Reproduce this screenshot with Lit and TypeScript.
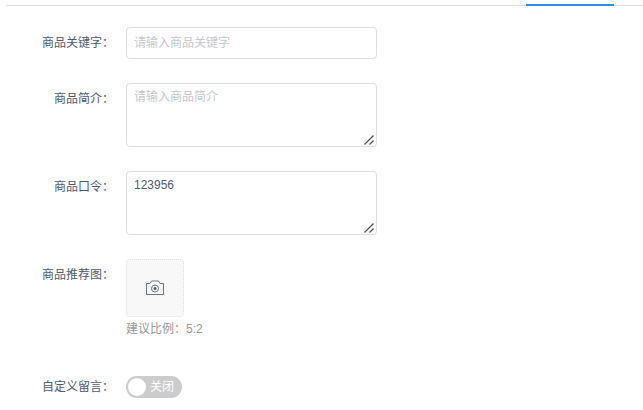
import { LitElement, html, css } from "lit";
import { customElement } from "lit/decorators.js";

@customElement("app-root")
export class AppRoot extends LitElement {
  static styles = css`
    :host {
      display: block;
      width: 643px;
      height: 410px;
      overflow: hidden;
      background: #fff;
      font-family: "Liberation Sans", "Noto Sans CJK SC", sans-serif;
      font-size: 12px;
      color: #515a6e;
    }
    .tabs {
      height: 6px;
      margin-left: 6px;
      box-sizing: border-box;
      border-bottom: 1px solid #dcdee2;
      display: flex;
      padding-left: 520px;
    }
    .tab-ink {
      width: 88px;
      height: 2px;
      margin-top: 4px;
      background: #2d8cf0;
    }
    form {
      display: flex;
      flex-direction: column;
      gap: 24px;
      padding-top: 21px;
    }
    .row {
      display: flex;
    }
    .label {
      width: 114px;
      flex: none;
      box-sizing: border-box;
      text-align: right;
      margin-right: 12px;
      line-height: 32px;
      white-space: nowrap;
    }
    input, textarea {
      width: 251px;
      box-sizing: border-box;
      border: 1px solid #dcdee2;
      border-radius: 4px;
      padding: 4px 7px;
      font: inherit;
      color: #515a6e;
      outline: none;
      background: #fff;
      display: block;
      margin: 0;
    }
    input { height: 32px; }
    textarea {
      height: 64px;
      line-height: 18px;
      resize: none;
    }
    .area { position: relative; width: 251px; height: 64px; }
    .grip { position: absolute; right: 3px; bottom: 2px; display: block; }
    ::placeholder { color: #c5c8ce; opacity: 1; }
    .upload {
      width: 58px;
      height: 58px;
      box-sizing: border-box;
      border: 1px dotted #dcdee2;
      border-radius: 4px;
      background: #f8f8f9;
      display: flex;
      align-items: center;
      justify-content: center;
    }
    .hint {
      color: #999;
      line-height: 16px;
      margin-top: 4px;
    }
    .switch-row { margin-top: 15px; }
    .switch-row .label { line-height: 22px; }
    .switch {
      width: 56px;
      height: 22px;
      border-radius: 11px;
      background: #ccc;
      box-sizing: border-box;
      padding: 2px;
      display: flex;
      align-items: center;
      gap: 4px;
      color: #fff;
      line-height: 18px;
    }
    .knob {
      width: 18px;
      height: 18px;
      border-radius: 50%;
      background: #fff;
      flex: none;
    }
  `;

  private grip() {
    return html`<svg class="grip" width="10" height="10" viewBox="0 0 10 10" fill="none" stroke="#555" stroke-width="1.3">
      <path d="M0.5 9.5 9.5 0.5" />
      <path d="M5.5 9.5 9.5 5.5" />
    </svg>`;
  }

  render() {
    return html`
      <div class="tabs"><div class="tab-ink"></div></div>
      <form>
        <div class="row">
          <div class="label">商品关键字：</div>
          <input placeholder="请输入商品关键字" />
        </div>
        <div class="row">
          <div class="label">商品简介：</div>
          <div class="area">
            <textarea placeholder="请输入商品简介"></textarea>
            ${this.grip()}
          </div>
        </div>
        <div class="row">
          <div class="label">商品口令：</div>
          <div class="area">
            <textarea .value=${"123956"}></textarea>
            ${this.grip()}
          </div>
        </div>
        <div class="row">
          <div class="label">商品推荐图：</div>
          <div>
            <div class="upload">
              <svg width="20" height="16" viewBox="0 0 20 16" fill="none" stroke="#6b7486" stroke-width="1">
                <path d="M1.5 3.5h3.5l1.5-2.5h7l1.5 2.5h3.5a1 1 0 0 1 0 0v11h-17z" stroke-linejoin="round" />
                <circle cx="10" cy="8.5" r="3.5" />
                <circle cx="10" cy="8.5" r="1.5" fill="#515a6e" stroke="none" />
              </svg>
            </div>
            <div class="hint">建议比例：5:2</div>
          </div>
        </div>
        <div class="row switch-row">
          <div class="label">自定义留言：</div>
          <div class="switch"><span class="knob"></span><span>关闭</span></div>
        </div>
      </form>
    `;
  }
}
